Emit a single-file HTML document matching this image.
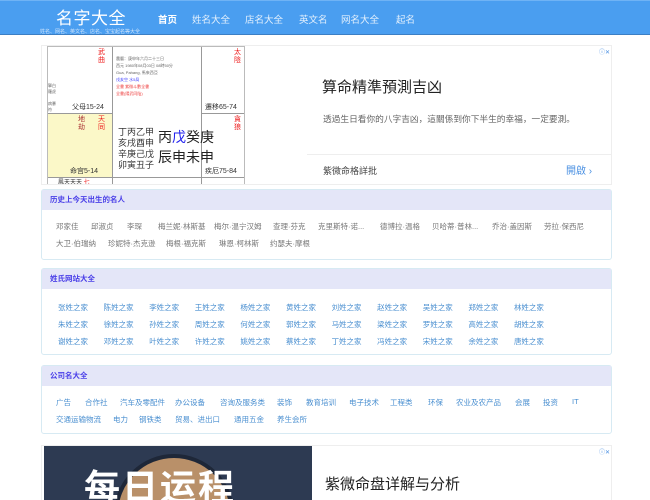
<!DOCTYPE html>
<html><head><meta charset="utf-8"><style>
*{margin:0;padding:0;box-sizing:border-box}
html,body{width:650px;height:500px;overflow:hidden}
body{background:#fff;font-family:"Liberation Sans","Noto Sans CJK SC",sans-serif;position:relative}
.hd{position:absolute;left:0;top:0;width:650px;height:35px;background:#4a9ef0;border-bottom:1px solid #3c7fc4;border-top:1px solid #6fb3f5}
.logo{position:absolute;left:56px;top:3px;color:#fff;font-size:17px;letter-spacing:0.5px}
.sub{position:absolute;left:40px;top:27px;color:#cfe4fb;font-size:5px;white-space:nowrap}
.nav{position:absolute;top:11px;color:#e3f0fd;font-size:9.5px}
.a{position:absolute;font-size:7.5px;color:#777;white-space:nowrap}
.l{color:#4a8fd0}
.box{position:absolute;left:41px;width:571px;border:1px solid #d7eaf3;border-radius:3px;background:#fff}
.box h3{height:20px;background:#e4e6f8;color:#4a3fe8;font-size:7.5px;line-height:20px;padding-left:8px;font-weight:bold}
.ad{position:absolute;left:41px;width:571px;border:1px solid #eee;background:#fff;overflow:hidden}
.c{position:absolute;white-space:nowrap}
</style></head><body>
<div class="hd">
<div class="logo">名字大全</div>
<div class="sub">姓名、网名、英文名、店名、宝宝起名等大全</div>
<div class="nav" style="left:158px;color:#fff;font-weight:bold">首页</div>
<div class="nav" style="left:192px">姓名大全</div>
<div class="nav" style="left:245px">店名大全</div>
<div class="nav" style="left:299px">英文名</div>
<div class="nav" style="left:341px">网名大全</div>
<div class="nav" style="left:396px">起名</div>
</div>

<div class="ad" style="top:45px;height:140px">
 <div style="position:absolute;left:5px;top:0;width:198px;height:140px;background:#fff;border:1px solid #bbb;overflow:hidden">
  <div style="position:absolute;left:0;top:66px;width:64px;height:64px;background:#fbf8c8"></div>
  <div style="position:absolute;left:64px;top:0;width:1px;height:140px;background:#999"></div>
  <div style="position:absolute;left:153px;top:0;width:1px;height:140px;background:#999"></div>
  <div style="position:absolute;left:0;top:66px;width:64px;height:1px;background:#999"></div>
  <div style="position:absolute;left:153px;top:66px;width:45px;height:1px;background:#999"></div>
  <div style="position:absolute;left:0;top:130px;width:198px;height:1px;background:#999"></div>
  <div style="position:absolute;left:0;top:0;width:20px;height:66px;font-size:4px;color:#666;line-height:6px;padding-top:36px">擎白<br>羅虎<br><br>病暴<br>符</div>
  <div class="c" style="left:24px;top:55px;font-size:7px;color:#333">父母15-24</div>
  <div class="c" style="left:22px;top:119px;font-size:7px;color:#333">命宫5-14</div>
  <div class="c" style="left:157px;top:55px;font-size:7px;color:#333">遷移65-74</div>
  <div class="c" style="left:157px;top:119px;font-size:7px;color:#333">疾厄75-84</div>
  <div class="c" style="left:70px;top:80px;font-size:9px;line-height:11px;color:#333">丁丙乙甲<br>亥戌酉申<br>辛庚己戊<br>卯寅丑子</div>
  <div class="c" style="left:110px;top:80px;font-size:14px;line-height:20px;color:#222">丙<span style="color:#22e">戊</span>癸庚<br>辰申未申</div>
  <div class="c" style="left:68px;top:8px;font-size:4px;line-height:7px;color:#666">農曆：庚申年六月二十三日<br>西元 1980年08月03日 08時50分<br>Gua, Pahang, 馬來西亞<br><span style="color:#44f">戌亥空 水5局</span><br><span style="color:#e44">全書 紫微斗數全書</span><br><span style="color:#e44">全書(陽武同陰)</span></div>
  <div class="c" style="left:50px;top:2px;font-size:7px;line-height:8px;color:#e22">武<br>曲</div>
  <div class="c" style="left:186px;top:2px;font-size:7px;line-height:8px;color:#e22">太<br>陰</div>
  <div class="c" style="left:50px;top:69px;font-size:7px;line-height:8px;color:#e22">天<br>同</div>
  <div class="c" style="left:30px;top:69px;font-size:7px;line-height:8px;color:#a33">地<br>劫</div>
  <div class="c" style="left:186px;top:69px;font-size:7px;line-height:8px;color:#e22">貪<br>狼</div>
  <div class="c" style="left:10px;top:133px;font-size:6px;line-height:7px;color:#333">鳳天天天 <span style="color:#e22">七</span></div>
 </div>
 <div class="c" style="left:280px;top:30px;font-size:15px;color:#222">算命精準預測吉凶</div>
 <div class="c" style="left:281px;top:66px;font-size:8.7px;color:#666">透過生日看你的八字吉凶，這關係到你下半生的幸福，一定要測。</div>
 <div style="position:absolute;left:265px;top:108px;width:305px;height:1px;background:#eee"></div>
 <div class="c" style="left:281px;top:118px;font-size:9px;color:#444">紫微命格詳批</div>
 <div class="c" style="left:524px;top:116px;font-size:10px;color:#4a90e2">開啟 ›</div>
 <div class="c" style="left:557px;top:1px;font-size:6px;color:#4a90e2">ⓘ✕</div>
</div>

<div class="box" style="top:189px;height:71px"><h3>历史上今天出生的名人</h3>
<div class="a" style="left:14px;top:31px">邓家佳</div><div class="a" style="left:49px;top:31px">邱淑贞</div><div class="a" style="left:85px;top:31px">李琛</div><div class="a" style="left:116px;top:31px">梅兰妮·林斯基</div><div class="a" style="left:172px;top:31px">梅尔·温宁汉姆</div><div class="a" style="left:231px;top:31px">查理·芬克</div><div class="a" style="left:276px;top:31px">克里斯特·诺...</div><div class="a" style="left:338px;top:31px">德博拉·温格</div><div class="a" style="left:390px;top:31px">贝哈蒂·普林...</div><div class="a" style="left:450px;top:31px">乔治·盖因斯</div><div class="a" style="left:502px;top:31px">劳拉·保西尼</div>
<div class="a" style="left:14px;top:48px">大卫·伯瑞纳</div><div class="a" style="left:66px;top:48px">珍妮特·杰克逊</div><div class="a" style="left:124px;top:48px">梅根·福克斯</div><div class="a" style="left:177px;top:48px">琳恩·柯林斯</div><div class="a" style="left:228px;top:48px">约瑟夫·摩根</div>
</div>

<div class="box" style="top:268px;height:87px"><h3>姓氏网站大全</h3>
<div style="position:absolute;left:16px;top:30px;width:560px;font-size:7.5px;line-height:17px;color:#4a8fd0">
<div style="display:grid;grid-template-columns:repeat(11,45.6px)">
<span>张姓之家</span><span>陈姓之家</span><span>李姓之家</span><span>王姓之家</span><span>杨姓之家</span><span>黄姓之家</span><span>刘姓之家</span><span>赵姓之家</span><span>吴姓之家</span><span>郑姓之家</span><span>林姓之家</span>
<span>朱姓之家</span><span>徐姓之家</span><span>孙姓之家</span><span>周姓之家</span><span>何姓之家</span><span>郭姓之家</span><span>马姓之家</span><span>梁姓之家</span><span>罗姓之家</span><span>高姓之家</span><span>胡姓之家</span>
<span>谢姓之家</span><span>邓姓之家</span><span>叶姓之家</span><span>许姓之家</span><span>姚姓之家</span><span>蔡姓之家</span><span>丁姓之家</span><span>冯姓之家</span><span>宋姓之家</span><span>余姓之家</span><span>唐姓之家</span>
</div></div>
</div>

<div class="box" style="top:365px;height:69px"><h3>公司名大全</h3>
<div class="a l" style="left:14px;top:31px">广告</div><div class="a l" style="left:43px;top:31px">合作社</div><div class="a l" style="left:78px;top:31px">汽车及零配件</div><div class="a l" style="left:133px;top:31px">办公设备</div><div class="a l" style="left:178px;top:31px">咨询及服务类</div><div class="a l" style="left:235px;top:31px">装饰</div><div class="a l" style="left:264px;top:31px">教育培训</div><div class="a l" style="left:307px;top:31px">电子技术</div><div class="a l" style="left:348px;top:31px">工程类</div><div class="a l" style="left:386px;top:31px">环保</div><div class="a l" style="left:414px;top:31px">农业及农产品</div><div class="a l" style="left:473px;top:31px">会展</div><div class="a l" style="left:501px;top:31px">投资</div><div class="a l" style="left:530px;top:31px">IT</div>
<div class="a l" style="left:14px;top:48px">交通运输物流</div><div class="a l" style="left:71px;top:48px">电力</div><div class="a l" style="left:97px;top:48px">钢铁类</div><div class="a l" style="left:133px;top:48px">贸易、进出口</div><div class="a l" style="left:192px;top:48px">通用五金</div><div class="a l" style="left:235px;top:48px">养生会所</div>
</div>

<div class="ad" style="top:445px;height:55px;border-bottom:none">
 <div style="position:absolute;left:2px;top:0;width:268px;height:55px;background:#2d3a52;overflow:hidden">
  <div style="position:absolute;left:70px;top:8px;width:120px;height:120px;border-radius:50%;background:#b99069;border:4px solid #1e2738"></div>
  <div class="c" style="left:40px;top:22px;font-size:36px;line-height:40px;color:#fff;font-weight:bold;letter-spacing:2px">每日运程</div>
 </div>
 <div class="c" style="left:283px;top:27px;font-size:15px;color:#222">紫微命盘详解与分析</div>
 <div class="c" style="left:557px;top:1px;font-size:6px;color:#4a90e2">ⓘ✕</div>
</div>
</body></html>
